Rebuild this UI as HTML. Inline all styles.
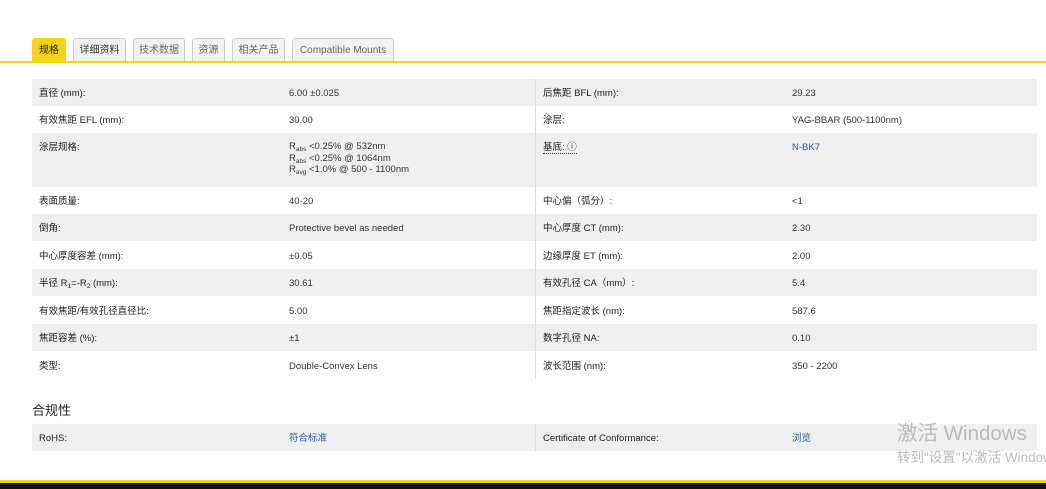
<!DOCTYPE html>
<html><head><meta charset="utf-8"><style>
*{margin:0;padding:0;box-sizing:border-box}
body{width:1046px;height:489px;background:#fff;font-family:"Liberation Sans","Noto Sans CJK SC",sans-serif;font-size:9.5px;color:#333;position:relative;overflow:hidden}
.tab{position:absolute;top:38px;height:24px;border:1px solid #ccc;border-bottom:none;background:#f2f2f2;border-radius:3px 3px 0 0;font-size:10px;line-height:24px;text-align:center;color:#666}
.tab.on{background:#f5d216;border-color:#f5d216;color:#222}
.line{position:absolute;left:0;top:61px;width:1046px;height:2px;background:#f5d216}
.row{position:absolute;left:32px;width:1005px;height:27px}
.g{background:#efefef}
.row span{position:absolute;top:8px;height:13px;line-height:13px;white-space:nowrap}
.a{left:7px;color:#222}.b{left:257px}.c{left:511px;color:#222}.d{left:760px}
.vl{position:absolute;left:535px;width:1px;background:#ddd}
sub{font-size:6.5px;line-height:0;vertical-align:-2px}
.link{color:#2b59a8}
</style></head><body>
<div class="tab on" style="left:32px;width:34px">规格</div>
<div class="tab" style="left:73px;width:53px;color:#333">详细资料</div>
<div class="tab" style="left:133px;width:52px">技术数据</div>
<div class="tab" style="left:192px;width:33px">资源</div>
<div class="tab" style="left:232px;width:53px">相关产品</div>
<div class="tab" style="left:292px;width:102px">Compatible Mounts</div>
<div class="line"></div>

<div class="row g" style="top:79px"><span class="a">直径 (mm):</span><span class="b">6.00 ±0.025</span><span class="c">后焦距 BFL (mm):</span><span class="d">29.23</span></div>
<div class="row" style="top:106px"><span class="a">有效焦距 EFL (mm):</span><span class="b">30.00</span><span class="c">涂层:</span><span class="d">YAG-BBAR (500-1100nm)</span></div>
<div class="row g" style="top:133px;height:54px"><span class="a">涂层规格:</span><span class="b" style="height:auto;line-height:11.5px;top:8px">R<sub>abs</sub> &lt;0.25% @ 532nm<br>R<sub>abs</sub> &lt;0.25% @ 1064nm<br>R<sub>avg</sub> &lt;1.0% @ 500 - 1100nm</span><span class="c" style="border-bottom:1px dotted #333">基底: ⓘ</span><span class="d link">N-BK7</span></div>
<div class="row" style="top:187px"><span class="a">表面质量:</span><span class="b">40-20</span><span class="c">中心偏（弧分）:</span><span class="d">&lt;1</span></div>
<div class="row g" style="top:214px"><span class="a">倒角:</span><span class="b">Protective bevel as needed</span><span class="c">中心厚度 CT (mm):</span><span class="d">2.30</span></div>
<div class="row" style="top:242px"><span class="a">中心厚度容差 (mm):</span><span class="b">±0.05</span><span class="c">边缘厚度 ET (mm):</span><span class="d">2.00</span></div>
<div class="row g" style="top:269px"><span class="a">半径 R<sub>1</sub>=-R<sub>2</sub> (mm):</span><span class="b">30.61</span><span class="c">有效孔径 CA（mm）:</span><span class="d">5.4</span></div>
<div class="row" style="top:297px"><span class="a">有效焦距/有效孔径直径比:</span><span class="b">5.00</span><span class="c">焦距指定波长 (nm):</span><span class="d">587.6</span></div>
<div class="row g" style="top:324px"><span class="a">焦距容差 (%):</span><span class="b">±1</span><span class="c">数字孔径 NA:</span><span class="d">0.10</span></div>
<div class="row" style="top:352px"><span class="a">类型:</span><span class="b">Double-Convex Lens</span><span class="c">波长范围 (nm):</span><span class="d">350 - 2200</span></div>
<div class="vl" style="top:79px;height:300px"></div>

<div style="position:absolute;left:32px;top:402px;font-size:13px;line-height:17px;color:#222">合规性</div>
<div class="row g" style="top:424px"><span class="a">RoHS:</span><span class="b link">符合标准</span><span class="c">Certificate of Conformance:</span><span class="d link">浏览</span></div>
<div class="vl" style="top:424px;height:27px"></div>
<div style="position:absolute;left:897px;top:421px;font-size:20.5px;line-height:25px;color:#bbb;white-space:nowrap">激活 Windows</div>
<div style="position:absolute;left:897px;top:449px;font-size:13.5px;line-height:17px;color:#bbb;white-space:nowrap">转到"设置"以激活 Windows。</div>
<div style="position:absolute;left:0;top:480px;width:1046px;height:3px;background:#f5d216"></div>
<div style="position:absolute;left:0;top:483px;width:1046px;height:6px;background:#111"></div>
</body></html>
